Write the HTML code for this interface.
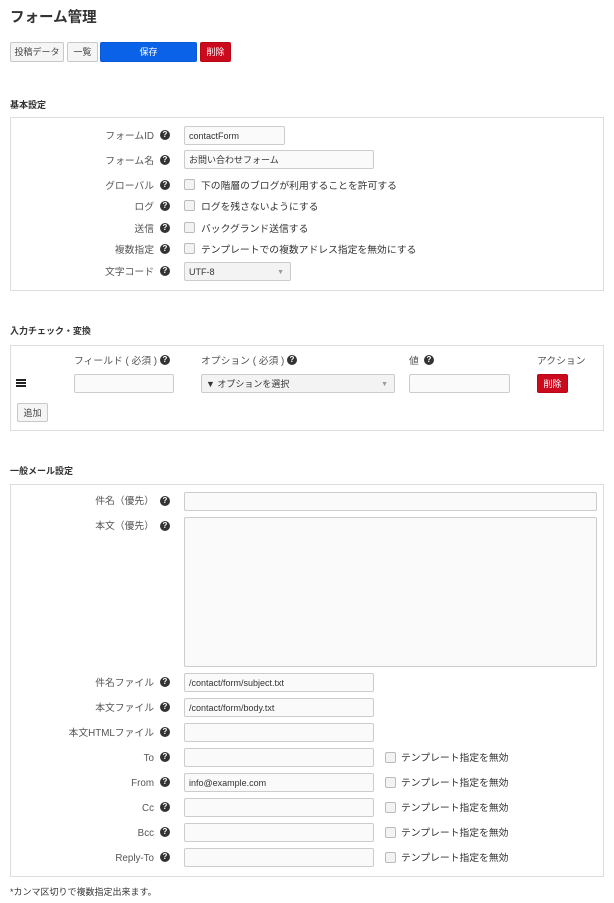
<!DOCTYPE html>
<html><head><meta charset="utf-8"><style>
*{box-sizing:border-box;margin:0;padding:0}
body{width:614px;height:903px;background:#fff;font-family:"Liberation Sans","Noto Sans CJK JP",sans-serif;color:#333;position:relative;overflow:hidden;font-size:10px}
h1{position:absolute;left:10px;top:8px;font-size:14.5px;line-height:20px;font-weight:bold;color:#333}
.btn{position:absolute;height:20px;font-size:9px;line-height:18px;text-align:center;border:1px solid #c8c8c8;background:#f5f5f5;color:#444;border-radius:2px}
.blue{background:#0a62e8;border-color:#0a5ad8;color:#fff}
.red{background:#cc0a1e;border-color:#b80818;color:#fff}
.h2{position:absolute;left:10px;font-size:9px;line-height:12px;font-weight:bold;color:#333}
.box{position:absolute;left:10px;width:594px;border:1px solid #ddd}
.lbl{position:absolute;right:460px;font-size:9.8px;color:#555;text-align:right;white-space:nowrap;line-height:19px;height:19px;padding-top:1.5px}
.q{position:absolute;left:160px;width:10px;height:10px;border-radius:50%;background:#333;color:#fff;font-size:8px;font-weight:bold;line-height:10px;text-align:center;font-family:"Liberation Sans",sans-serif}
.in{position:absolute;border:1px solid #ccc;border-radius:2px;background:#fafafa;font-size:9px;color:#333;padding-left:4px;padding-top:1.5px;line-height:15px;height:19px}
.cb{position:absolute;width:11px;height:11px;border:1px solid #bbb;border-radius:2px;background:#f3f3f3}
.ct{position:absolute;font-size:9.8px;color:#333;white-space:nowrap;line-height:19px;height:19px;padding-top:1.5px}
.hb{position:absolute;left:16px;width:10px;height:2px;background:#222}
</style></head><body>
<h1>フォーム管理</h1>
<div class="btn" style="left:10px;top:42px;width:54px">投稿データ</div>
<div class="btn" style="left:67px;top:42px;width:31px">一覧</div>
<div class="btn blue" style="left:100px;top:42px;width:97px">保存</div>
<div class="btn red" style="left:200px;top:42px;width:31px">削除</div>

<div class="h2" style="top:99px">基本設定</div>
<div class="box" style="top:117px;height:174px"></div>
<div class="lbl" style="top:125px">フォームID</div><div class="q" style="top:130px">?</div>
<div class="in" style="left:184px;top:126px;width:101px">contactForm</div>
<div class="lbl" style="top:150px">フォーム名</div><div class="q" style="top:155px">?</div>
<div class="in" style="left:184px;top:150px;width:190px">お問い合わせフォーム</div>
<div class="lbl" style="top:175px">グローバル</div><div class="q" style="top:180px">?</div>
<div class="cb" style="left:184px;top:179px"></div><div class="ct" style="left:201px;top:175px">下の階層のブログが利用することを許可する</div>
<div class="lbl" style="top:196px">ログ</div><div class="q" style="top:201px">?</div>
<div class="cb" style="left:184px;top:200px"></div><div class="ct" style="left:201px;top:196px">ログを残さないようにする</div>
<div class="lbl" style="top:218px">送信</div><div class="q" style="top:223px">?</div>
<div class="cb" style="left:184px;top:222px"></div><div class="ct" style="left:201px;top:218px">バックグランド送信する</div>
<div class="lbl" style="top:239px">複数指定</div><div class="q" style="top:244px">?</div>
<div class="cb" style="left:184px;top:243px"></div><div class="ct" style="left:201px;top:239px">テンプレートでの複数アドレス指定を無効にする</div>
<div class="lbl" style="top:261px">文字コード</div><div class="q" style="top:266px">?</div>
<div class="in" style="left:184px;top:262px;width:107px;background:#f3f3f3">UTF-8<span style="position:absolute;right:6px;color:#999;font-size:7px">▼</span></div>

<div class="h2" style="top:325px">入力チェック・変換</div>
<div class="box" style="top:345px;height:86px"></div>
<div class="ct" style="left:74px;top:350px;color:#555">フィールド ( 必須 )</div><div class="q" style="left:160px;top:355px">?</div>
<div class="ct" style="left:201px;top:350px;color:#555">オプション ( 必須 )</div><div class="q" style="left:287px;top:355px">?</div>
<div class="ct" style="left:409px;top:350px;color:#555">値</div><div class="q" style="left:424px;top:355px">?</div>
<div class="ct" style="left:537px;top:350px;color:#555">アクション</div>
<div class="hb" style="top:379px"></div><div class="hb" style="top:382px"></div><div class="hb" style="top:385px"></div>
<div class="in" style="left:74px;top:374px;width:100px"></div>
<div class="in" style="left:201px;top:374px;width:194px;background:#f3f3f3">▼ オプションを選択<span style="position:absolute;right:6px;color:#999;font-size:7px">▼</span></div>
<div class="in" style="left:409px;top:374px;width:101px"></div>
<div class="btn red" style="left:537px;top:374px;width:31px;height:19px">削除</div>
<div class="btn" style="left:17px;top:403px;width:31px;height:19px">追加</div>

<div class="h2" style="top:465px">一般メール設定</div>
<div class="box" style="top:484px;height:393px"></div>
<div class="lbl" style="top:490px">件名（優先）</div><div class="q" style="top:496px">?</div>
<div class="in" style="left:184px;top:492px;width:413px"></div>
<div class="lbl" style="top:515px">本文（優先）</div><div class="q" style="top:521px">?</div>
<div class="in" style="left:184px;top:517px;width:413px;height:150px"></div>
<div class="lbl" style="top:672px">件名ファイル</div><div class="q" style="top:677px">?</div>
<div class="in" style="left:184px;top:673px;width:190px">/contact/form/subject.txt</div>
<div class="lbl" style="top:697px">本文ファイル</div><div class="q" style="top:702px">?</div>
<div class="in" style="left:184px;top:698px;width:190px">/contact/form/body.txt</div>
<div class="lbl" style="top:722px">本文HTMLファイル</div><div class="q" style="top:727px">?</div>
<div class="in" style="left:184px;top:723px;width:190px"></div>

<div class="lbl" style="top:747px">To</div><div class="q" style="top:752px">?</div>
<div class="in" style="left:184px;top:748px;width:190px"></div>
<div class="cb" style="left:385px;top:752px"></div><div class="ct" style="left:401px;top:747px">テンプレート指定を無効</div>
<div class="lbl" style="top:772px">From</div><div class="q" style="top:777px">?</div>
<div class="in" style="left:184px;top:773px;width:190px">info@example.com</div>
<div class="cb" style="left:385px;top:777px"></div><div class="ct" style="left:401px;top:772px">テンプレート指定を無効</div>
<div class="lbl" style="top:797px">Cc</div><div class="q" style="top:802px">?</div>
<div class="in" style="left:184px;top:798px;width:190px"></div>
<div class="cb" style="left:385px;top:802px"></div><div class="ct" style="left:401px;top:797px">テンプレート指定を無効</div>
<div class="lbl" style="top:822px">Bcc</div><div class="q" style="top:827px">?</div>
<div class="in" style="left:184px;top:823px;width:190px"></div>
<div class="cb" style="left:385px;top:827px"></div><div class="ct" style="left:401px;top:822px">テンプレート指定を無効</div>
<div class="lbl" style="top:847px">Reply-To</div><div class="q" style="top:852px">?</div>
<div class="in" style="left:184px;top:848px;width:190px"></div>
<div class="cb" style="left:385px;top:852px"></div><div class="ct" style="left:401px;top:847px">テンプレート指定を無効</div>

<div class="ct" style="left:10px;top:881px;font-size:9px">*カンマ区切りで複数指定出来ます。</div>
</body></html>
